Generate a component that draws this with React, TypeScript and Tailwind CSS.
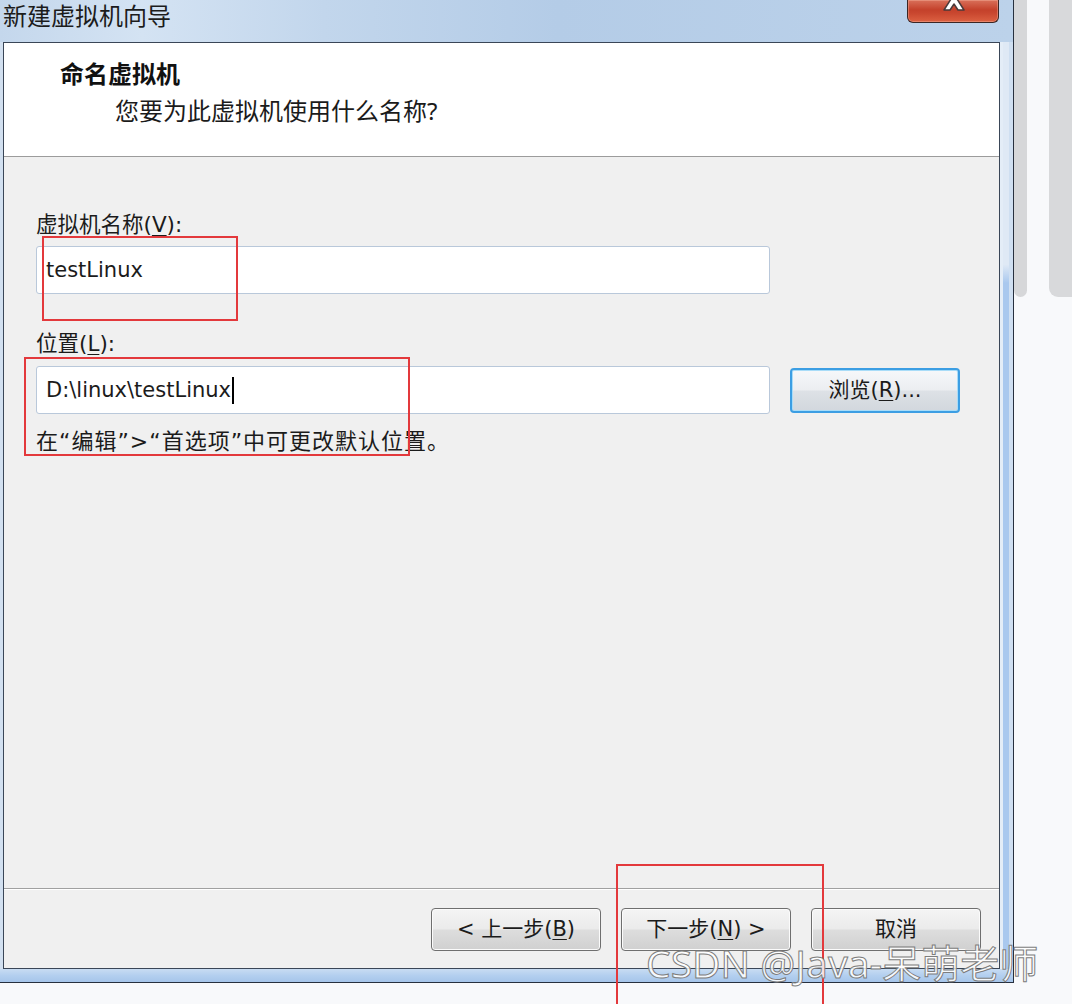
import type { ReactNode } from 'react'

const UI_FONT = '"DejaVu Sans", "Noto Sans CJK SC", sans-serif'
const HEAD_FONT = '"Noto Sans", "Noto Sans CJK SC", sans-serif'

function Key({ k }: { k: string }) {
  return <span className="underline underline-offset-[3px] decoration-1">{k}</span>
}

function WinButton({ children, focused }: { children: ReactNode; focused?: boolean }) {
  return (
    <button
      className={
        focused
          ? 'flex h-[45px] w-[170px] items-center justify-center rounded-[4px] border-2 border-[#3c9ee3] bg-[linear-gradient(180deg,#f6f8fa_0%,#eceef1_48%,#dde1e6_52%,#d2d7dd_100%)] text-[21px] text-[#1b1b1b] shadow-[inset_0_0_0_1px_#a8dcf8]'
          : 'flex h-[43px] w-[170px] items-center justify-center rounded-[4px] border border-[#6f6f6f] bg-[linear-gradient(180deg,#f4f4f4_0%,#ebebeb_48%,#dddddd_52%,#d0d0d0_100%)] text-[21px] text-[#1b1b1b] shadow-[inset_0_0_0_1px_#fbfbfb]'
      }
    >
      {children}
    </button>
  )
}

function TextField({ children }: { children: ReactNode }) {
  return (
    <div className="flex h-[48px] w-[734px] shrink-0 items-center rounded-[3px] border border-[#b9c8da] bg-white pl-[9px] text-[21px] text-[#1b1b1b]">
      {children}
    </div>
  )
}

function TitleBar() {
  return (
    <div
      className="flex h-[42px] items-start justify-between bg-[linear-gradient(90deg,#c4d7ec_0%,#d4e3f3_14%,#c2d6ec_32%,#b4cce7_55%,#bcd2ea_100%)]"
      style={{ fontFamily: HEAD_FONT }}
    >
      <span className="pl-[3px] pt-[1px] text-[24px] leading-[30px] text-[#1c1c1c]">新建虚拟机向导</span>
      {/* close button, cut at the top of the shot */}
      <div className="relative mr-[14px] h-[23px] w-[92px] overflow-hidden rounded-b-[6px] border border-t-0 border-[#3b2624] bg-[linear-gradient(180deg,#d9705a_0%,#c4412b_45%,#c9472f_60%,#dc6142_100%)] shadow-[inset_0_0_0_1px_rgba(255,200,180,0.35)]">
        <svg className="absolute left-[32px] top-[-14px]" width="28" height="26" viewBox="0 0 28 26">
          <path
            d="M4 2 L10 2 L14 8 L18 2 L24 2 L17 13 L24 24 L18 24 L14 18 L10 24 L4 24 L11 13 Z"
            fill="#ffffff"
            stroke="#4a3a3a"
            strokeWidth="1.5"
            strokeLinejoin="round"
          />
        </svg>
      </div>
    </div>
  )
}

export default function App() {
  return (
    <div
      className="relative flex h-[1004px] w-[1072px] overflow-hidden bg-[#f8f9fb]"
      style={{ fontFamily: UI_FONT }}
    >
      {/* wizard window */}
      <div className="flex h-[983px] w-[1014px] shrink-0 flex-col border-b border-r border-[#27303e]">
        <TitleBar />

        <div className="flex flex-1">
          <div className="w-[3px] bg-[#d2e0f0]" />

          <div className="flex flex-1 flex-col border border-[#3a4657] bg-[#f0f0f0]">
            {/* header */}
            <div className="h-[114px] border-b border-[#9c9c9c] bg-white pt-[16px]" style={{ fontFamily: HEAD_FONT }}>
              <div className="pl-[56px] text-[24px] font-bold leading-[30px] text-[#111]">命名虚拟机</div>
              <div className="mt-[7px] pl-[111px] text-[24px] leading-[30px] text-[#1b1b1b]">您要为此虚拟机使用什么名称?</div>
            </div>

            {/* body */}
            <div className="flex flex-1 flex-col pl-[32px] pt-[53px] text-[22px] leading-[30px] text-[#1b1b1b]">
              <div className="text-[21.5px]">
                虚拟机名称(<Key k="V" />):
              </div>
              <div className="mt-[6px]">
                <TextField>testLinux</TextField>
              </div>

              <div className="mt-[35px] text-[21.5px]">
                位置(<Key k="L" />):
              </div>
              <div className="mt-[7px] flex items-center gap-[20px]">
                <TextField>
                  D:\linux\testLinux
                  <span className="ml-[1px] h-[27px] w-[1.5px] bg-black" />
                </TextField>
                <WinButton focused>
                  浏览(<Key k="R" />)...
                </WinButton>
              </div>
              <div className="mt-[13px] tracking-[1px]">在“编辑”&gt;“首选项”中可更改默认位置。</div>
            </div>

            {/* footer */}
            <div className="flex h-[80px] justify-end gap-[20px] border-t border-[#a0a0a0] pr-[18px] pt-[19px] shadow-[inset_0_1px_0_#ffffff]">
              <WinButton>
                &lt; 上一步(<Key k="B" />)
              </WinButton>
              <WinButton>
                下一步(<Key k="N" />) &gt;
              </WinButton>
              <WinButton>取消</WinButton>
            </div>
          </div>

          <div className="flex w-[13px]">
            <div className="w-[3px] bg-[#e4edf7]" />
            <div className="w-[6px] bg-[linear-gradient(180deg,#dfe9f5_0%,#dfe9f5_24%,#a9c8ee_26%,#a9c8ee_100%)]" />
            <div className="w-[4px] bg-[#cfdff1]" />
          </div>
        </div>

        <div className="h-[13px] bg-[linear-gradient(180deg,#c8dcf2_0%,#b3cfef_50%,#a6c5ea_100%)]" />
      </div>

      {/* background beside the window */}
      <div className="flex flex-1 items-start gap-[22px]">
        <div className="h-[297px] w-[13px] rounded-b-[7px] bg-[#d6d7d9]" />
        <div className="h-[297px] flex-1 rounded-bl-[9px] bg-[#d8d9db]" />
      </div>

      {/* red annotation boxes */}
      <div className="pointer-events-none absolute left-[42px] top-[236px] h-[85px] w-[196px] border-2 border-[#e3393c]" />
      <div className="pointer-events-none absolute left-[24px] top-[357px] h-[99px] w-[386px] border-2 border-[#e3393c]" />
      <div className="pointer-events-none absolute left-[616px] top-[864px] h-[150px] w-[208px] border-2 border-[#e3393c]" />

      {/* watermark */}
      <div
        className="pointer-events-none absolute left-[646px] top-[943px] whitespace-nowrap text-[39px] leading-none text-white/85 [-webkit-text-stroke:1px_#7d7d7d]"
        style={{ fontFamily: HEAD_FONT }}
      >
        CSDN @Java-呆萌老师
      </div>
    </div>
  )
}
